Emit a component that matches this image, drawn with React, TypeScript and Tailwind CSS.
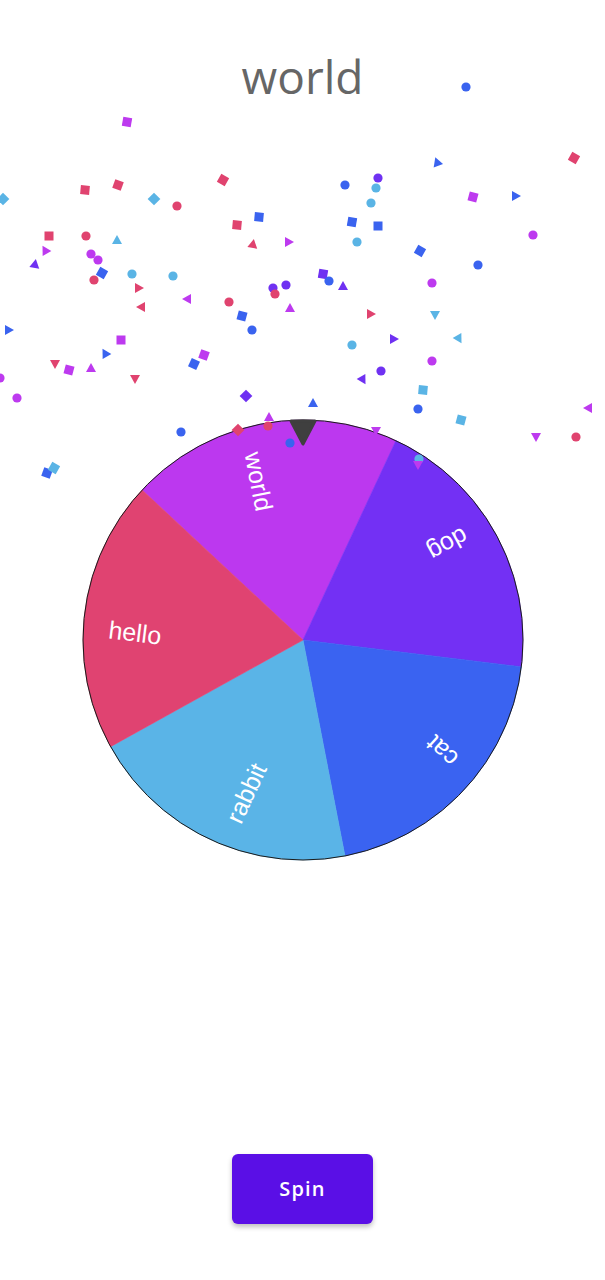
import React from "react";

const R = "#e0436f";
const M = "#bd3aef";
const V = "#6f31f2";
const B = "#3a63ef";
const L = "#5ab4e5";

type C = [number, number, "c" | "s" | "t", string, number?];

const confetti: C[] = [
  [466, 87, "c", B],
  [127, 122, "s", M, 10],
  [3, 199, "s", L, 45],
  [85, 190, "s", R, 5],
  [118, 185, "s", R, 20],
  [154, 199, "s", L, 45],
  [177, 206, "c", R],
  [223, 180, "s", R, 30],
  [259, 217, "s", B, 5],
  [237, 225, "s", R, 5],
  [253, 244, "t", R, 10],
  [289, 242, "t", M, 90],
  [49, 236, "s", R, 0],
  [86, 236, "c", R],
  [117, 240, "t", L, 0],
  [45, 250, "t", M, -30],
  [35, 264, "t", V, 10],
  [91, 254, "c", M],
  [98, 260, "c", M],
  [102, 273, "s", B, 30],
  [94, 280, "c", R],
  [132, 274, "c", L],
  [173, 276, "c", L],
  [273, 288, "c", V],
  [286, 285, "c", V],
  [275, 294, "c", R],
  [187, 299, "t", M, -90],
  [229, 302, "c", R],
  [139, 288, "t", R, 90],
  [141, 307, "t", R, -90],
  [290, 308, "t", M, 0],
  [242, 316, "s", B, 15],
  [9, 330, "t", B, 90],
  [252, 330, "c", B],
  [121, 340, "s", M, 0],
  [105, 353, "t", B, -30],
  [204, 355, "s", M, 20],
  [194, 364, "s", B, 25],
  [55, 364, "t", R, 180],
  [69, 370, "s", M, 15],
  [91, 368, "t", M, 0],
  [135, 379, "t", R, 180],
  [0, 378, "c", M],
  [17, 398, "c", M],
  [246, 396, "s", V, 45],
  [269, 417, "t", M, 0],
  [238, 430, "s", R, 45],
  [268, 426, "c", R],
  [181, 432, "c", B],
  [290, 443, "c", B],
  [47, 473, "s", B, 20],
  [54, 468, "s", L, 30],
  [437, 162, "t", B, -20],
  [574, 158, "s", R, 30],
  [345, 185, "c", B],
  [378, 178, "c", V],
  [376, 188, "c", L],
  [371, 203, "c", L],
  [473, 197, "s", M, 15],
  [516, 196, "t", B, 90],
  [352, 222, "s", B, 10],
  [378, 226, "s", B, 0],
  [357, 242, "c", L],
  [420, 251, "s", B, 30],
  [533, 235, "c", M],
  [478, 265, "c", B],
  [323, 274, "s", V, 10],
  [329, 281, "c", B],
  [343, 286, "t", V, 0],
  [432, 283, "c", M],
  [371, 314, "t", R, 90],
  [435, 315, "t", L, 180],
  [394, 339, "t", V, 90],
  [459, 339, "t", L, 150],
  [352, 345, "c", L],
  [432, 361, "c", M],
  [381, 371, "c", V],
  [363, 380, "t", V, 150],
  [423, 390, "s", L, 5],
  [313, 403, "t", B, 0],
  [418, 409, "c", B],
  [461, 420, "s", L, 15],
  [588, 408, "t", M, -90],
  [536, 437, "t", M, 180],
  [576, 437, "c", R],
  [376, 431, "t", M, 180],
  [419, 459, "c", L],
  [418, 465, "t", M, 180],
];

const slices = [
  { label: "world", color: "#bc38ef", start: 313 },
  { label: "dog", color: "#7330f4", start: 25 },
  { label: "cat", color: "#3a63f1", start: 97 },
  { label: "rabbit", color: "#5ab4e7", start: 169 },
  { label: "hello", color: "#e04371", start: 241 },
];

const cx = 221;
const cy = 221;
const r = 220;
const pt = (a: number, rad: number) => [
  cx + rad * Math.sin((a * Math.PI) / 180),
  cy - rad * Math.cos((a * Math.PI) / 180),
];

function Wheel() {
  return (
    <svg width={442} height={442} viewBox="0 0 442 442" className="overflow-visible">
      {slices.map((s) => {
        const [x1, y1] = pt(s.start, r);
        const [x2, y2] = pt(s.start + 72, r);
        return (
          <path
            key={s.label}
            d={`M${cx} ${cy} L${x1} ${y1} A${r} ${r} 0 0 1 ${x2} ${y2} Z`}
            fill={s.color}
            stroke={s.color}
            strokeWidth={0.6}
            strokeLinejoin="round"
          />
        );
      })}
      <circle cx={cx} cy={cy} r={r} fill="none" stroke="#1a1a1a" strokeWidth={1} />
      {slices.map((s) => {
        const c = s.start + 36;
        const [x, y] = pt(c, 194);
        return (
          <text
            key={s.label + "t"}
            x={x}
            y={y}
            dy={13}
            fill="#ffffff"
            fontSize={25}
            fontFamily="'Liberation Sans', Arial, sans-serif"
            dominantBaseline="central"
            transform={`rotate(${c + 90} ${x} ${y})`}
          >
            {s.label}
          </text>
        );
      })}
      <polygon
        points="209,2 233,2 221,25"
        fill="#3f3f3f"
        stroke="#3f3f3f"
        strokeWidth={3}
        strokeLinejoin="round"
      />
    </svg>
  );
}

function Confetti() {
  return (
    <svg
      className="absolute left-0 top-0 pointer-events-none"
      width={605}
      height={520}
      viewBox="0 0 605 520"
    >
      {confetti.map(([x, y, s, col, rot = 0], i) => {
        if (s === "c") return <circle key={i} cx={x} cy={y} r={4.6} fill={col} />;
        if (s === "s")
          return (
            <rect
              key={i}
              x={x - 4.5}
              y={y - 4.5}
              width={9}
              height={9}
              fill={col}
              transform={`rotate(${rot} ${x} ${y})`}
            />
          );
        return (
          <polygon
            key={i}
            points={`${x},${y - 5} ${x + 5},${y + 4} ${x - 5},${y + 4}`}
            fill={col}
            transform={`rotate(${rot} ${x} ${y})`}
          />
        );
      })}
    </svg>
  );
}

export default function App() {
  return (
    <div className="relative min-h-[1280px] w-full overflow-hidden bg-white flex flex-col items-center">
      <h1
        className="mt-[51px] h-[50px] text-[46px] leading-[50px] text-[#666666]"
        style={{ fontFamily: "'Open Sans', 'Noto Sans', sans-serif" }}
      >
        world
      </h1>
      <div className="mt-[318px] w-[442px] h-[442px]">
        <Wheel />
      </div>
      <button
        className="mt-[293px] w-[141px] h-[70px] rounded-[6px] bg-[#5a0fe6] text-white text-[20px] font-semibold tracking-[0.06em] shadow-[0_3px_5px_rgba(0,0,0,0.25)]"
        style={{ fontFamily: "'Open Sans', 'Noto Sans', sans-serif" }}
      >
        Spin
      </button>
      <Confetti />
    </div>
  );
}
